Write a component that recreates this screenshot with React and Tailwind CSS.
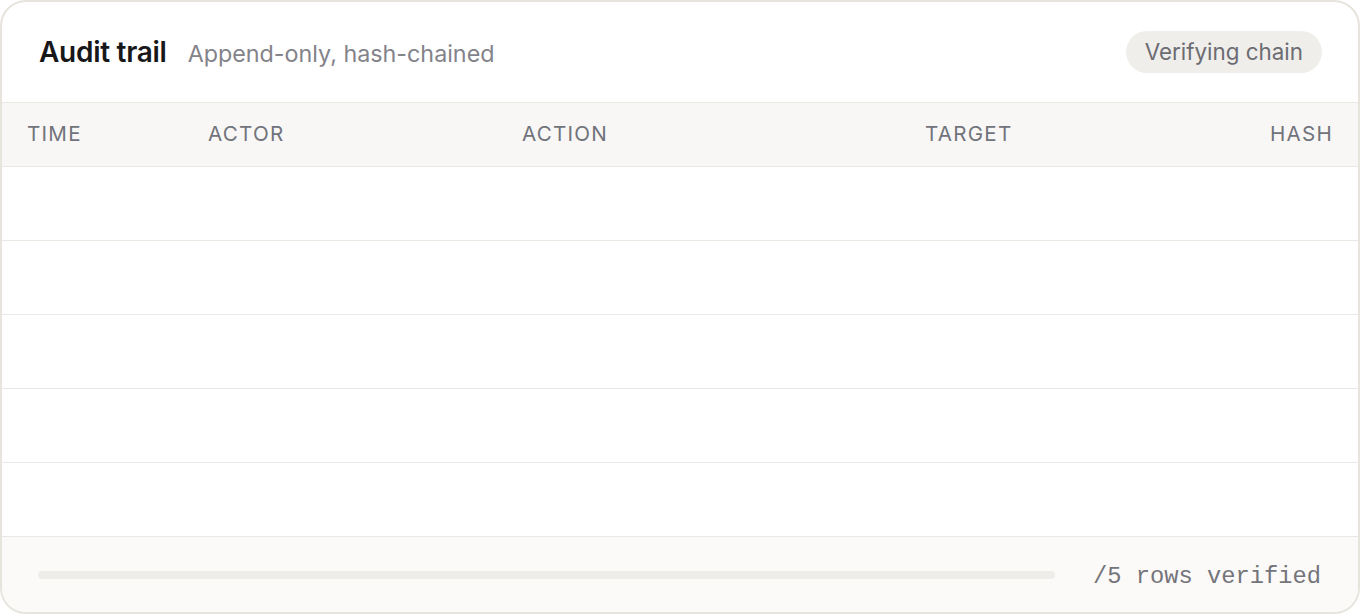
const columns = [
  { key: "time", label: "Time" },
  { key: "actor", label: "Actor" },
  { key: "action", label: "Action" },
  { key: "target", label: "Target" },
  { key: "hash", label: "Hash", right: true },
];

const rows = [0, 1, 2, 3, 4];

const gridCols = "grid grid-cols-[181px_314px_403px_1fr_auto] px-[25px]";

export default function App() {
  return (
    <div className="w-[1360px] h-[614px] bg-white font-['Inter','Noto_Sans',sans-serif]">
      <div className="h-full flex flex-col border-2 border-[#e7e4dd] rounded-[26px] overflow-hidden bg-white">
        <div className="h-[101px] shrink-0 flex items-center justify-between pl-[37px] pr-[36px] border-b border-[#ebe9e4]">
          <div className="flex items-baseline gap-[21px]">
            <h2 className="text-[28px] font-semibold text-[#18181a] tracking-[-0.01em]">
              Audit trail
            </h2>
            <span className="text-[23.3px] text-[#83838a]">
              Append-only, hash-chained
            </span>
          </div>
          <span className="h-[42px] px-[19px] flex items-center rounded-full bg-[#efeeeb] text-[22.4px] text-[#6c6c72]">
            Verifying chain
          </span>
        </div>

        <div className={`${gridCols} h-[64px] shrink-0 items-center bg-[#f8f7f5] border-b border-[#ebe9e4]`}>
          {columns.map((c) => (
            <span
              key={c.key}
              className={`text-[20.6px] uppercase tracking-[0.06em] text-[#71737b] ${c.right ? "text-right" : ""}`}
            >
              {c.label}
            </span>
          ))}
        </div>

        {rows.map((r) => (
          <div
            key={r}
            className={`${gridCols} h-[74px] shrink-0 border-b border-[#ebe9e4]`}
          />
        ))}

        <div className="flex-1 flex items-center gap-[38px] pl-[36px] pr-[37px] bg-[#fbfaf8]">
          <div className="flex-1 h-[8px] rounded-full bg-[#efede9]" />
          <span className="pt-[5px] font-['Liberation_Mono',monospace] text-[23.75px] text-[#74747a]">
            /5 rows verified
          </span>
        </div>
      </div>
    </div>
  );
}
